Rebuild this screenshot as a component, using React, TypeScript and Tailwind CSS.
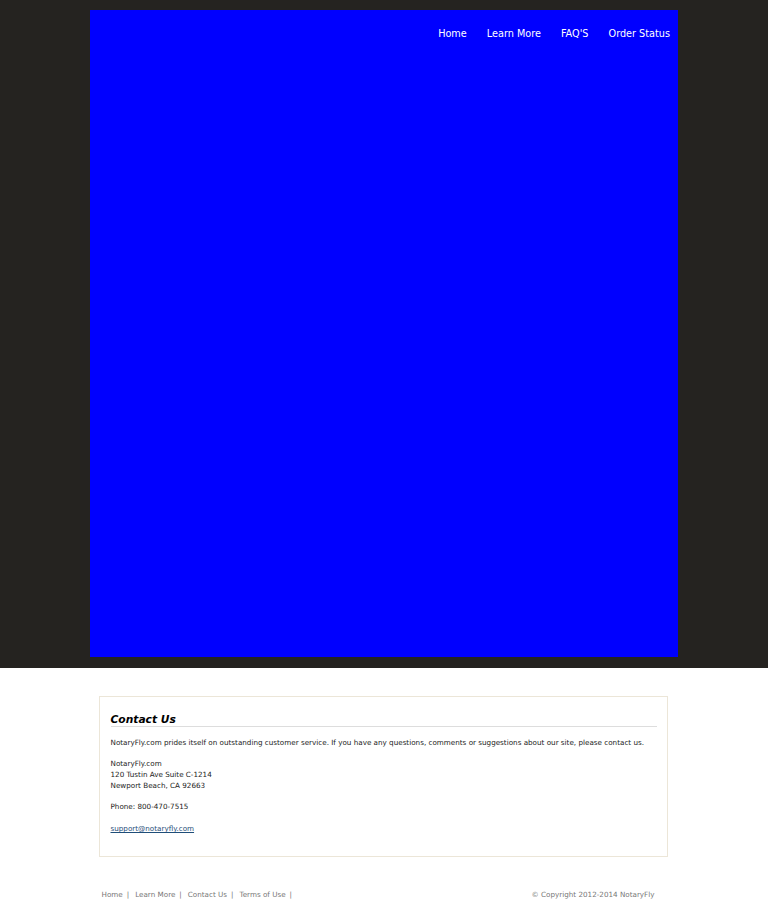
import React from "react";

const navLinks = ["Home", "Learn More", "FAQ'S", "Order Status"];
const footerLinks = ["Home", "Learn More", "Contact Us", "Terms of Use"];

const App = () => {
    return (
        <div className="min-h-[918px] bg-white font-['DejaVu_Sans',sans-serif]">
            <section className="bg-[#252320] pt-[10px] pb-[11px]">
                <div className="mx-auto w-[588px] h-[647px] bg-[#0000ff]">
                    <nav className="flex justify-end gap-[20px] pr-[8px] pt-[17px]">
                        {navLinks.map((link) => (
                            <a key={link} href="#" className="text-white text-[9.7px] leading-[14px]">
                                {link}
                            </a>
                        ))}
                    </nav>
                </div>
            </section>
            <section className="pt-[28px]">
                <div className="mx-auto w-[569px] -translate-x-[1px] border border-[#ece6d8] pl-[11px] pr-[10px] pt-[16px] pb-[22px] text-[7.2px] leading-[11px] text-[#222]">
                    <h2 className="text-[10.7px] leading-[13px] font-bold italic text-black border-b border-[#ddd] mb-[10px]">
                        Contact Us
                    </h2>
                    <p>
                        NotaryFly.com prides itself on outstanding customer service. If you have any questions, comments or
                        suggestions about our site, please contact us.
                    </p>
                    <p className="mt-[10px]">
                        NotaryFly.com
                        <br />
                        120 Tustin Ave Suite C-1214
                        <br />
                        Newport Beach, CA 92663
                    </p>
                    <p className="mt-[10px]">Phone: 800-470-7515</p>
                    <p className="mt-[11px]">
                        <a href="#" className="underline text-[#1f4e79]">
                            support@notaryfly.com
                        </a>
                    </p>
                </div>
                <footer className="mx-auto w-[569px] -translate-x-[1px] flex justify-between items-center pt-[32px] pb-[8px] text-[7.2px] leading-[11px] text-[#777]">
                    <div className="flex pl-[3px]">
                        {footerLinks.map((link) => (
                            <span key={link} className="mr-[6px]">
                                <a href="#">{link}</a>
                                <span className="ml-[4px]">|</span>
                            </span>
                        ))}
                    </div>
                    <div className="pr-[13px]">© Copyright 2012-2014 NotaryFly</div>
                </footer>
            </section>
        </div>
    );
};

export default App;
